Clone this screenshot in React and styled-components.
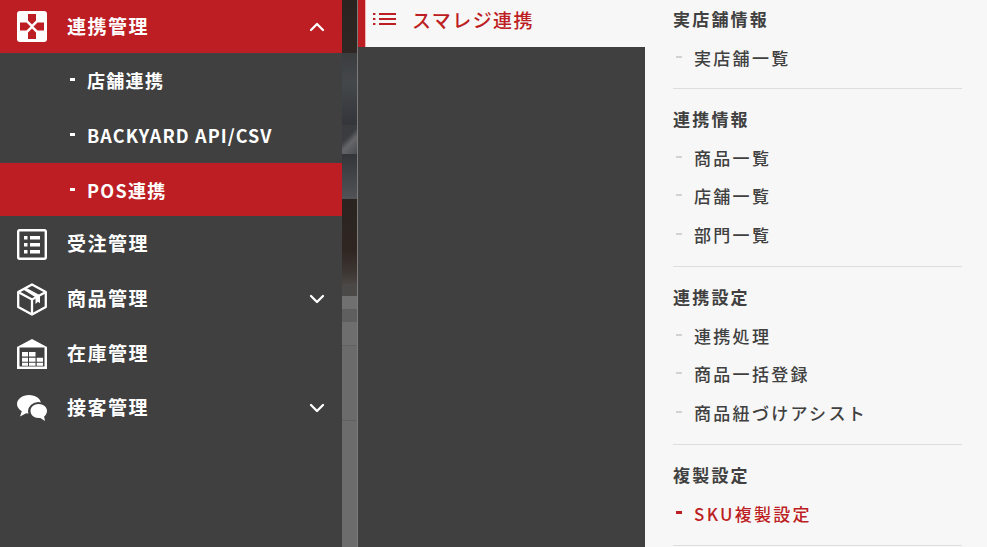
import React from 'react'
import styled, { createGlobalStyle } from 'styled-components'
import { ChevronUp, ChevronDown } from 'lucide-react'

const FONT = `"Noto Sans CJK JP", "Noto Sans", sans-serif`

const GlobalStyle = createGlobalStyle`
  html, body { margin: 0; padding: 0; height: 100%; overflow: hidden; }
  body { font-family: ${FONT}; background: #404040; }
  #root { height: 100%; }
`

const LinkIcon = () => (
  <svg width="30" height="31" viewBox="0 0 30 31">
    <rect width="30" height="31" rx="3" fill="#fff" />
    <path d="M11 3h8v6.500l-4 4-4-4zM11 28h8v-6.500l-4-4-4 4zM3 11.500h6.500l4 4-4 4H3zM27 11.500h-6.500l-4 4 4 4H27z" fill="#bd1e23" />
  </svg>
)

const OrderIcon = () => (
  <svg width="30" height="31" viewBox="0 0 30 31">
    <rect x="1.200" y="1.200" width="27.600" height="28.600" rx="1.500" fill="none" stroke="#fff" strokeWidth="2.400" />
    <path d="M7 7h3.500v3.500H7zM13 7h10v3.500H13zM7 14h3.500v3.500H7zM13 14h10v3.500H13zM7 21h3.500v3.500H7zM13 21h10v3.500H13z" fill="#fff" />
  </svg>
)

const BoxIcon = () => (
  <svg width="30" height="33" viewBox="0 0 30 33">
    <path d="M15 1.500 28.800 9v15L15 31.500 1.200 24V9z" fill="none" stroke="#fff" strokeWidth="2.300" strokeLinejoin="round" />
    <path d="M2 9.500l13 7 13-7M15 16.500V31" fill="none" stroke="#fff" strokeWidth="2.300" />
    <path d="M6.500 6.800 9.500 5 23 12.300v8l-2-1.500-2.500 2.200v-6.800z" fill="#fff" />
  </svg>
)

const StockIcon = () => (
  <svg width="30" height="30" viewBox="0 0 30 30">
    <path d="M0 8 15 0l15 8v22H0z" fill="#fff" />
    <path d="M2.500 8.500h25v19h-25z" fill="#404040" />
    <path d="M5 13h6v4.500H5zM12 13h6.500v4.500H12zM5 18.700h6v4H5zM12 18.700h6.500v4H12zM19.700 18.700H26v4h-6.300zM5 23.800h6v3H5zM12 23.800h6.500v3H12zM19.700 23.800H26v3h-6.300z" fill="#fff" />
  </svg>
)

const ChatIcon = () => (
  <svg width="30" height="26" viewBox="0 0 30 26">
    <path d="M12 0C5.400 0 0 4 0 9c0 3 1.900 5.600 4.800 7.200L3 21.500l6.300-3.300c.9.200 1.800.3 2.700.3 6.600 0 12-4 12-9.500S18.600 0 12 0z" fill="#fff" />
    <ellipse cx="21.500" cy="16.500" rx="10.500" ry="9.500" fill="#404040" />
    <path d="M21.500 9C17 9 13.500 12 13.500 16s3.500 7 8 7c.6 0 1.200 0 1.800-.1l4.700 3-.9-4.400c1.800-1.300 2.900-3.300 2.900-5.500 0-4-3.500-7-8.500-7z" fill="#fff" />
  </svg>
)

const ListIcon = () => (
  <svg width="24" height="14" viewBox="0 0 24 14">
    <path d="M0 1h2.400v2H0zM0 6h2.400v2H0zM0 11h2.400v2H0zM6 .9h17v2.200H6zM6 5.900h17v2.200H6zM6 10.900h17v2.200H6z" fill="#bd1e23" />
  </svg>
)

const Page = styled.div`
  display: flex;
  width: 987px;
  height: 547px;
  overflow: hidden;
`

const Sidebar = styled.nav`
  width: 342px;
  flex: none;
  background: #404040;
  color: #fff;
`

const MenuRow = styled.div`
  display: flex;
  align-items: center;
  box-sizing: border-box;
  height: ${p => p.$height}px;
  padding: 0 11px 0 17px;
  background: ${p => (p.$active ? '#bd1e23' : 'transparent')};
`

const IconSlot = styled.span`
  display: flex;
  align-items: center;
  justify-content: center;
  width: 30px;
  margin-right: 20px;
`

const MenuLabel = styled.span`
  flex: 1;
  margin-top: -3px;
  font-size: 19px;
  font-weight: 700;
  letter-spacing: 1.500px;
  line-height: 1;
`

const Chevron = styled.span`
  display: flex;
  width: 28px;
  justify-content: center;
`

const SubRow = styled.div`
  display: flex;
  align-items: center;
  box-sizing: border-box;
  height: ${p => p.$height}px;
  padding: 0 0 ${p => (p.$active ? 0 : 2)}px 70px;
  background: ${p => (p.$active ? '#bd1e23' : 'transparent')};
  font-size: 18px;
  font-weight: 700;
  letter-spacing: ${p => p.$spacing || 1.3}px;
`

const SubDash = styled.span`
  width: 5px;
  height: 3px;
  margin-right: 12px;
  background: #fff;
`

const Backdrop = styled.div`
  width: 16px;
  flex: none;
  display: flex;
  flex-direction: column;
  border-right: 1px solid #7c7c7c;
  box-sizing: border-box;
  background: #6c6c6c;
`

const BackdropBand = styled.div`
  height: ${p => p.$height}px;
  background: ${p => p.$color};
  border-bottom: ${p => (p.$line ? '1px solid #616161' : 'none')};
`

const MiddleColumn = styled.div`
  width: 287px;
  flex: none;
  background: #404040;
`

const TabHeader = styled.div`
  display: flex;
  align-items: center;
  height: 47px;
  box-sizing: border-box;
  padding: 0 0 9px 8px;
  border-left: 7px solid #bd1e23;
  box-shadow: inset 1px 0 0 #eeb4b4;
  background: #f7f7f7;
  color: #bd1e23;
  font-size: 19px;
  letter-spacing: 1.400px;
  font-weight: 500;
`

const TabIcon = styled.span`
  display: flex;
  margin-right: 15px;
`

const Panel = styled.aside`
  flex: 1;
  padding: 0 25px 0 28px;
  background: #f7f7f7;
  color: #404040;
`

const Group = styled.section`
  padding-top: ${p => (p.$first ? 6 : 17.5)}px;
  padding-bottom: ${p => (p.$first ? 11 : 12)}px;
  border-bottom: 1px solid #dedede;
`

const GroupTitle = styled.h3`
  margin: 0 0 6px;
  height: 26px;
  line-height: 26px;
  font-size: 17px;
  font-weight: 700;
  letter-spacing: 2.200px;
`

const Entry = styled.div`
  display: flex;
  align-items: center;
  height: 38.500px;
  font-size: 17px;
  font-weight: 500;
  letter-spacing: 2.300px;
  color: ${p => (p.$active ? '#bd1e23' : '#404040')};
`

const EntryDash = styled.span`
  width: 6px;
  height: ${p => (p.$active ? 3 : 2)}px;
  margin: -1px 12px 0 3px;
  background: ${p => (p.$active ? '#bd1e23' : '#d2d2d2')};
`

const groups = [
  { title: '実店舗情報', items: ['実店舗一覧'] },
  { title: '連携情報', items: ['商品一覧', '店舗一覧', '部門一覧'] },
  { title: '連携設定', items: ['連携処理', '商品一括登録', '商品紐づけアシスト'] },
  { title: '複製設定', items: ['SKU複製設定'], activeItem: 'SKU複製設定' },
]

const bands = [
  { height: 53, color: 'linear-gradient(180deg, #2b2320, #2e2724)' },
  { height: 72, color: 'linear-gradient(180deg, #3a3c3e, #45484b 40%, #33353a 100%)' },
  { height: 30, color: 'linear-gradient(135deg, #3a3c40 40%, #666669 60%, #4a4c50 100%)' },
  { height: 45, color: 'linear-gradient(180deg, #333539, #525356)' },
  { height: 85, color: 'linear-gradient(180deg, #2a2320, #2f2622 60%, #3c3532 85%, #4a4543 100%)' },
  { height: 12, color: '#4b4947' },
  { height: 13, color: '#707070' },
  { height: 13, color: '#5f5f5f' },
  { height: 23, color: '#6e6e6e', line: true },
  { height: 75, color: '#6b6b6b', line: true },
  { height: 126, color: '#6c6c6c' },
]

const App = () => {
  return (
    <Page>
      <GlobalStyle />
      <Sidebar>
        <MenuRow $height={53} $active>
          <IconSlot><LinkIcon /></IconSlot>
          <MenuLabel>連携管理</MenuLabel>
          <Chevron><ChevronUp size={24} color="#fff" strokeWidth={2.3} /></Chevron>
        </MenuRow>
        <SubRow $height={55}><SubDash />店舗連携</SubRow>
        <SubRow $height={55} $spacing={1.1}><SubDash />BACKYARD API/CSV</SubRow>
        <SubRow $height={53} $active><SubDash />POS連携</SubRow>
        <MenuRow $height={56}>
          <IconSlot><OrderIcon /></IconSlot>
          <MenuLabel>受注管理</MenuLabel>
        </MenuRow>
        <MenuRow $height={54}>
          <IconSlot><BoxIcon /></IconSlot>
          <MenuLabel>商品管理</MenuLabel>
          <Chevron><ChevronDown size={24} color="#fff" strokeWidth={2.3} /></Chevron>
        </MenuRow>
        <MenuRow $height={55}>
          <IconSlot><StockIcon /></IconSlot>
          <MenuLabel>在庫管理</MenuLabel>
        </MenuRow>
        <MenuRow $height={54}>
          <IconSlot><ChatIcon /></IconSlot>
          <MenuLabel>接客管理</MenuLabel>
          <Chevron><ChevronDown size={24} color="#fff" strokeWidth={2.3} /></Chevron>
        </MenuRow>
      </Sidebar>

      <Backdrop>
        {bands.map((band, i) => (
          <BackdropBand key={i} $height={band.height} $color={band.color} $line={band.line} />
        ))}
      </Backdrop>

      <MiddleColumn>
        <TabHeader>
          <TabIcon><ListIcon /></TabIcon>
          スマレジ連携
        </TabHeader>
      </MiddleColumn>

      <Panel>
        {groups.map((group, i) => (
          <Group key={group.title} $first={i === 0}>
            <GroupTitle>{group.title}</GroupTitle>
            {group.items.map(item => (
              <Entry key={item} $active={item === group.activeItem}>
                <EntryDash $active={item === group.activeItem} />
                {item}
              </Entry>
            ))}
          </Group>
        ))}
      </Panel>
    </Page>
  )
}

export default App
